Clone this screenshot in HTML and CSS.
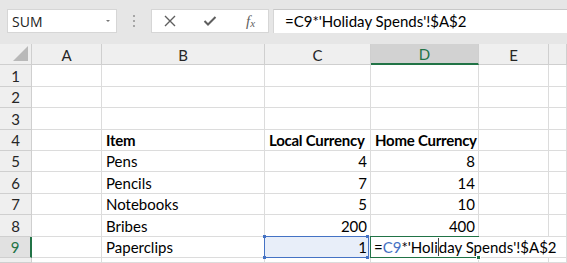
FILE: index.html
```html
<!DOCTYPE html>
<html lang="en">
<head>
    <meta charset="UTF-8">
    <title>Holiday Spends</title>
    <link rel="stylesheet" href="styles.css">
</head>
<body>

    <div class="toolbar">
        <div class="namebox">
            <span>SUM</span>
            <span class="caret"></span>
        </div>
        <div class="grip"><i></i><i></i><i></i></div>
        <div class="fx-buttons">
            <svg width="12" height="12" viewBox="0 0 12 12"><path d="M1 1 L11 11 M11 1 L1 11" stroke="#5f5f5f" stroke-width="1.4" fill="none"/></svg>
            <svg width="14" height="12" viewBox="0 0 14 12"><path d="M1.5 6 L5 9.5 L12.5 2" stroke="#5f5f5f" stroke-width="2" fill="none"/></svg>
            <span class="fx">f<sub>x</sub></span>
        </div>
        <div class="formula">=C9*'Holiday Spends'!$A$2</div>
    </div>

    <div class="sheet">
        <!-- column headers -->
        <div class="corner"><span class="tri"></span></div>
        <div class="ch">A</div>
        <div class="ch">B</div>
        <div class="ch">C</div>
        <div class="ch active">D</div>
        <div class="ch">E</div>
        <div class="ch"></div>

        <div class="rh">1</div><div class="c"></div><div class="c"></div><div class="c"></div><div class="c"></div><div class="c"></div><div class="c"></div>
        <div class="rh">2</div><div class="c"></div><div class="c"></div><div class="c"></div><div class="c"></div><div class="c"></div><div class="c"></div>
        <div class="rh">3</div><div class="c"></div><div class="c"></div><div class="c"></div><div class="c"></div><div class="c"></div><div class="c"></div>

        <div class="rh">4</div><div class="c"></div>
        <div class="c b">Item</div>
        <div class="c b">Local Currency</div>
        <div class="c b">Home Currency</div>
        <div class="c"></div><div class="c"></div>

        <div class="rh">5</div><div class="c"></div>
        <div class="c">Pens</div><div class="c num">4</div><div class="c num">8</div>
        <div class="c"></div><div class="c"></div>

        <div class="rh">6</div><div class="c"></div>
        <div class="c">Pencils</div><div class="c num">7</div><div class="c num">14</div>
        <div class="c"></div><div class="c"></div>

        <div class="rh">7</div><div class="c"></div>
        <div class="c">Notebooks</div><div class="c num">5</div><div class="c num">10</div>
        <div class="c"></div><div class="c"></div>

        <div class="rh">8</div><div class="c"></div>
        <div class="c">Bribes</div><div class="c num">200</div><div class="c num">400</div>
        <div class="c"></div><div class="c"></div>

        <div class="rh active">9</div><div class="c"></div>
        <div class="c">Paperclips</div>
        <div class="c num ref">1<span class="handles"></span></div>
        <div class="c edit"><span class="editor">=<span class="blue">C9</span>*'Holi<span class="cursor"></span>day Spends'!$A$2</span><span class="fill"></span></div>
        <div class="c"></div><div class="c"></div>

        <div class="rh"></div><div class="c"></div><div class="c"></div><div class="c"></div><div class="c"></div><div class="c"></div><div class="c"></div>
    </div>

</body>
</html>
```

FILE: styles.css
```css
body {
    margin: 0;
    width: 567px;
    height: 263px;
    overflow: hidden;
    background-color: #e6e6e6;
    font-family: Lato, 'Liberation Sans', sans-serif;
    color: #000;
}

/* formula bar */
.toolbar {
    display: flex;
    align-items: flex-start;
    height: 44px;
    padding-top: 9px;
    box-sizing: border-box;
}

.namebox {
    display: flex;
    align-items: center;
    justify-content: space-between;
    margin-left: 7px;
    width: 110px;
    height: 24px;
    box-sizing: border-box;
    padding: 0 6px 0 4px;
    background: #fff;
    border: 1px solid #d6d6d6;
    font-family: 'Open Sans', sans-serif;
    font-size: 14px;
    color: #222;
}
.caret {
    width: 0;
    height: 0;
    border-left: 2px solid transparent;
    border-right: 2px solid transparent;
    border-top: 2px solid #777;
}

.grip {
    width: 34px;
    height: 24px;
    display: flex;
    flex-direction: column;
    align-items: center;
    justify-content: center;
    gap: 3px;
}
.grip i {
    width: 2px;
    height: 2px;
    background: #a6a6a6;
}

.fx-buttons {
    width: 118px;
    height: 24px;
    box-sizing: border-box;
    background: #fff;
    border: 1px solid #d6d6d6;
    display: flex;
    align-items: center;
    padding-left: 12px;
    gap: 27px;
}
.fx {
    font-family: 'Liberation Serif', serif;
    font-style: italic;
    font-size: 15px;
    color: #5f5f5f;
    margin-left: 2px;
}
.fx sub {
    font-size: 11px;
    vertical-align: -1px;
}

.formula {
    flex: 1;
    margin-left: 4px;
    height: 24px;
    box-sizing: border-box;
    background: #fff;
    border-top: 1px solid #c8c8c8;
    border-left: 1px solid #d6d6d6;
    padding-left: 11px;
    font-size: 15px;
    line-height: 22px;
    white-space: nowrap;
}

/* grid */
.sheet {
    display: grid;
    grid-template-columns: 32px 70px 163px 106px 108px 70px 1fr;
    grid-template-rows: 21px 22px 21px 22px 21px 21px 22px 21px 22px 21px 1fr;
    height: 219px;
    background: #fff;
    font-size: 15px;
}

.sheet > div {
    box-sizing: border-box;
    border-right: 1px solid #dcdcdc;
    border-bottom: 1px solid #dcdcdc;
    display: flex;
    align-items: flex-end;
    white-space: nowrap;
}

.corner, .ch, .rh {
    background: #efefef;
    color: #262626;
    justify-content: center;
    align-items: center !important;
}
.sheet > .corner, .sheet > .ch, .sheet > .rh {
    border-color: #cfcfcf;
}
.corner {
    position: relative;
}
.tri {
    position: absolute;
    right: 3px;
    bottom: 3px;
    width: 0;
    height: 0;
    border-left: 15px solid transparent;
    border-bottom: 15px solid #b9b9b9;
}
.ch {
    padding-top: 1px;
}

.sheet > .ch.active {
    background: #d2d2d2;
    color: #217346;
    border-bottom: 2px solid #217346;
}
.sheet > .rh.active {
    background: #e1e1e1;
    color: #217346;
    border-right: 2px solid #217346;
}

.c {
    padding: 0 3px 1px 4px;
}
.b {
    font-weight: bold;
    letter-spacing: -0.25px;
}
.num {
    justify-content: flex-end;
}

/* C9: reference highlight */
.ref {
    position: relative;
    background: #e8eef9;
}
.ref::before {
    content: "";
    position: absolute;
    left: -1px;
    top: -1px;
    right: 1px;
    bottom: -1px;
    border: 1px solid #4472c4;
}
.handles {
    position: absolute;
    left: -2px;
    top: -2px;
    width: 3px;
    height: 3px;
    background: #4472c4;
    box-shadow: 103px 0 #4472c4, 0 21px #4472c4, 103px 21px #4472c4;
}

/* D9: cell being edited */
.edit {
    position: relative;
}
.edit::before {
    content: "";
    position: absolute;
    left: -1px;
    top: -1px;
    right: -1px;
    bottom: -1px;
    border: 1px solid #217346;
}
.editor {
    position: absolute;
    left: 2px;
    top: 0;
    bottom: 0;
    padding: 0 3px 1px 1px;
    background: #fff;
    display: flex;
    align-items: flex-end;
    z-index: 1;
}
.blue {
    color: #4472c4;
}
.cursor {
    display: inline-block;
    align-self: stretch;
    width: 0;
    margin-top: 1px;
    border-left: 1px solid #444;
}
.fill {
    position: absolute;
    right: -3px;
    bottom: -3px;
    width: 5px;
    height: 5px;
    background: #217346;
    border: 1px solid #fff;
    box-sizing: border-box;
    z-index: 2;
}
```
